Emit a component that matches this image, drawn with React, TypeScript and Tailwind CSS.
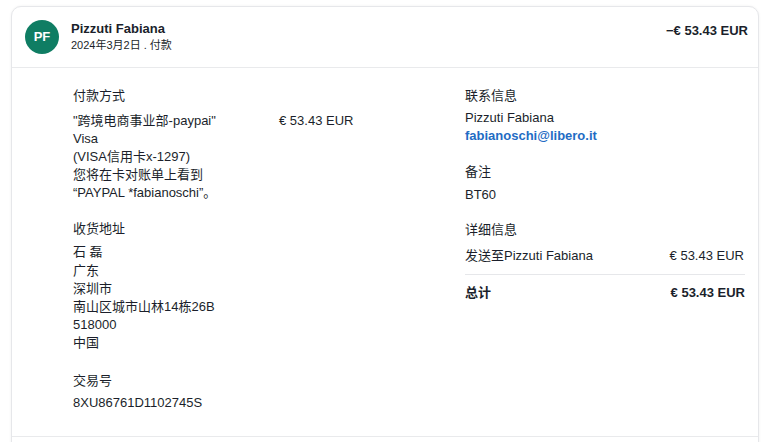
// Transaction detail card
const FONT = { fontFamily: '"Liberation Sans", "Noto Sans CJK SC", sans-serif' };

function Section({ title, children, className = "", gap = "mb-[4px]" }: { title: string; children: React.ReactNode; className?: string; gap?: string }) {
  return (
    <div className={className}>
      <div className={`text-[13px] leading-[18px] ${gap}`}>{title}</div>
      <div className="text-[13px] leading-[18px]">{children}</div>
    </div>
  );
}

export default function App() {
  return (
    <div className="min-h-screen bg-white pt-[6px] pl-[11px] pr-[25px] text-[#1b1f2b]" style={FONT}>
      <div className="rounded-t-[10px] border border-[#e6e7ea] shadow-[0_0_3px_rgba(0,0,0,0.06)] bg-white h-[460px]">
        {/* Header */}
        <div className="flex items-center h-[61px] pl-[13px] pr-[10px] border-b border-[#e9eaec]">
          <div className="w-[34px] h-[34px] rounded-full bg-[#0f7d63] text-white flex items-center justify-center text-[13px] font-bold">
            PF
          </div>
          <div className="ml-[12px] flex-1">
            <div className="text-[13px] font-bold leading-[16px]">Pizzuti Fabiana</div>
            <div className="text-[11px] leading-[15px] mt-[1px]">2024年3月2日 . 付款</div>
          </div>
          <div className="self-start mt-[14px] text-[13px] font-bold">−€ 53.43 EUR</div>
        </div>

        {/* Body */}
        <div className="flex pl-[61px] pr-[13px] pt-[19px] h-[369px] border-b border-[#e9eaec]">
          <div className="w-[392px] flex flex-col">
            <Section title="付款方式" gap="mb-[7px]">
              <div className="flex">
                <div className="w-[206px]">
                  <div>"跨境电商事业部-paypai"</div>
                  <div>Visa</div>
                  <div>(VISA信用卡x-1297)</div>
                  <div>您将在卡对账单上看到</div>
                  <div>“PAYPAL *fabianoschi”。</div>
                </div>
                <div>€ 53.43 EUR</div>
              </div>
            </Section>
            <Section title="收货地址" className="mt-[18px]">
              <div className="leading-[20px]">石 磊</div>
              <div>广东</div>
              <div>深圳市</div>
              <div>南山区城市山林14栋26B</div>
              <div>518000</div>
              <div>中国</div>
            </Section>
            <Section title="交易号" className="mt-[20px]">
              8XU86761D1102745S
            </Section>
          </div>

          <div className="flex-1 flex flex-col">
            <Section title="联系信息">
              <div>Pizzuti Fabiana</div>
              <div className="text-[#1f6cc4] font-bold">fabianoschi@libero.it</div>
            </Section>
            <Section title="备注" className="mt-[18px]" gap="mb-[5px]">
              BT60
            </Section>
            <Section title="详细信息" className="mt-[17px]" gap="mb-[8px]">
              <div className="flex justify-between pr-[1px] pb-[9px] border-b border-[#e6e7ea]">
                <span>发送至Pizzuti Fabiana</span>
                <span>€ 53.43 EUR</span>
              </div>
              <div className="flex justify-between font-bold pt-[9px]">
                <span>总计</span>
                <span>€ 53.43 EUR</span>
              </div>
            </Section>
          </div>
        </div>
      </div>
    </div>
  );
}
